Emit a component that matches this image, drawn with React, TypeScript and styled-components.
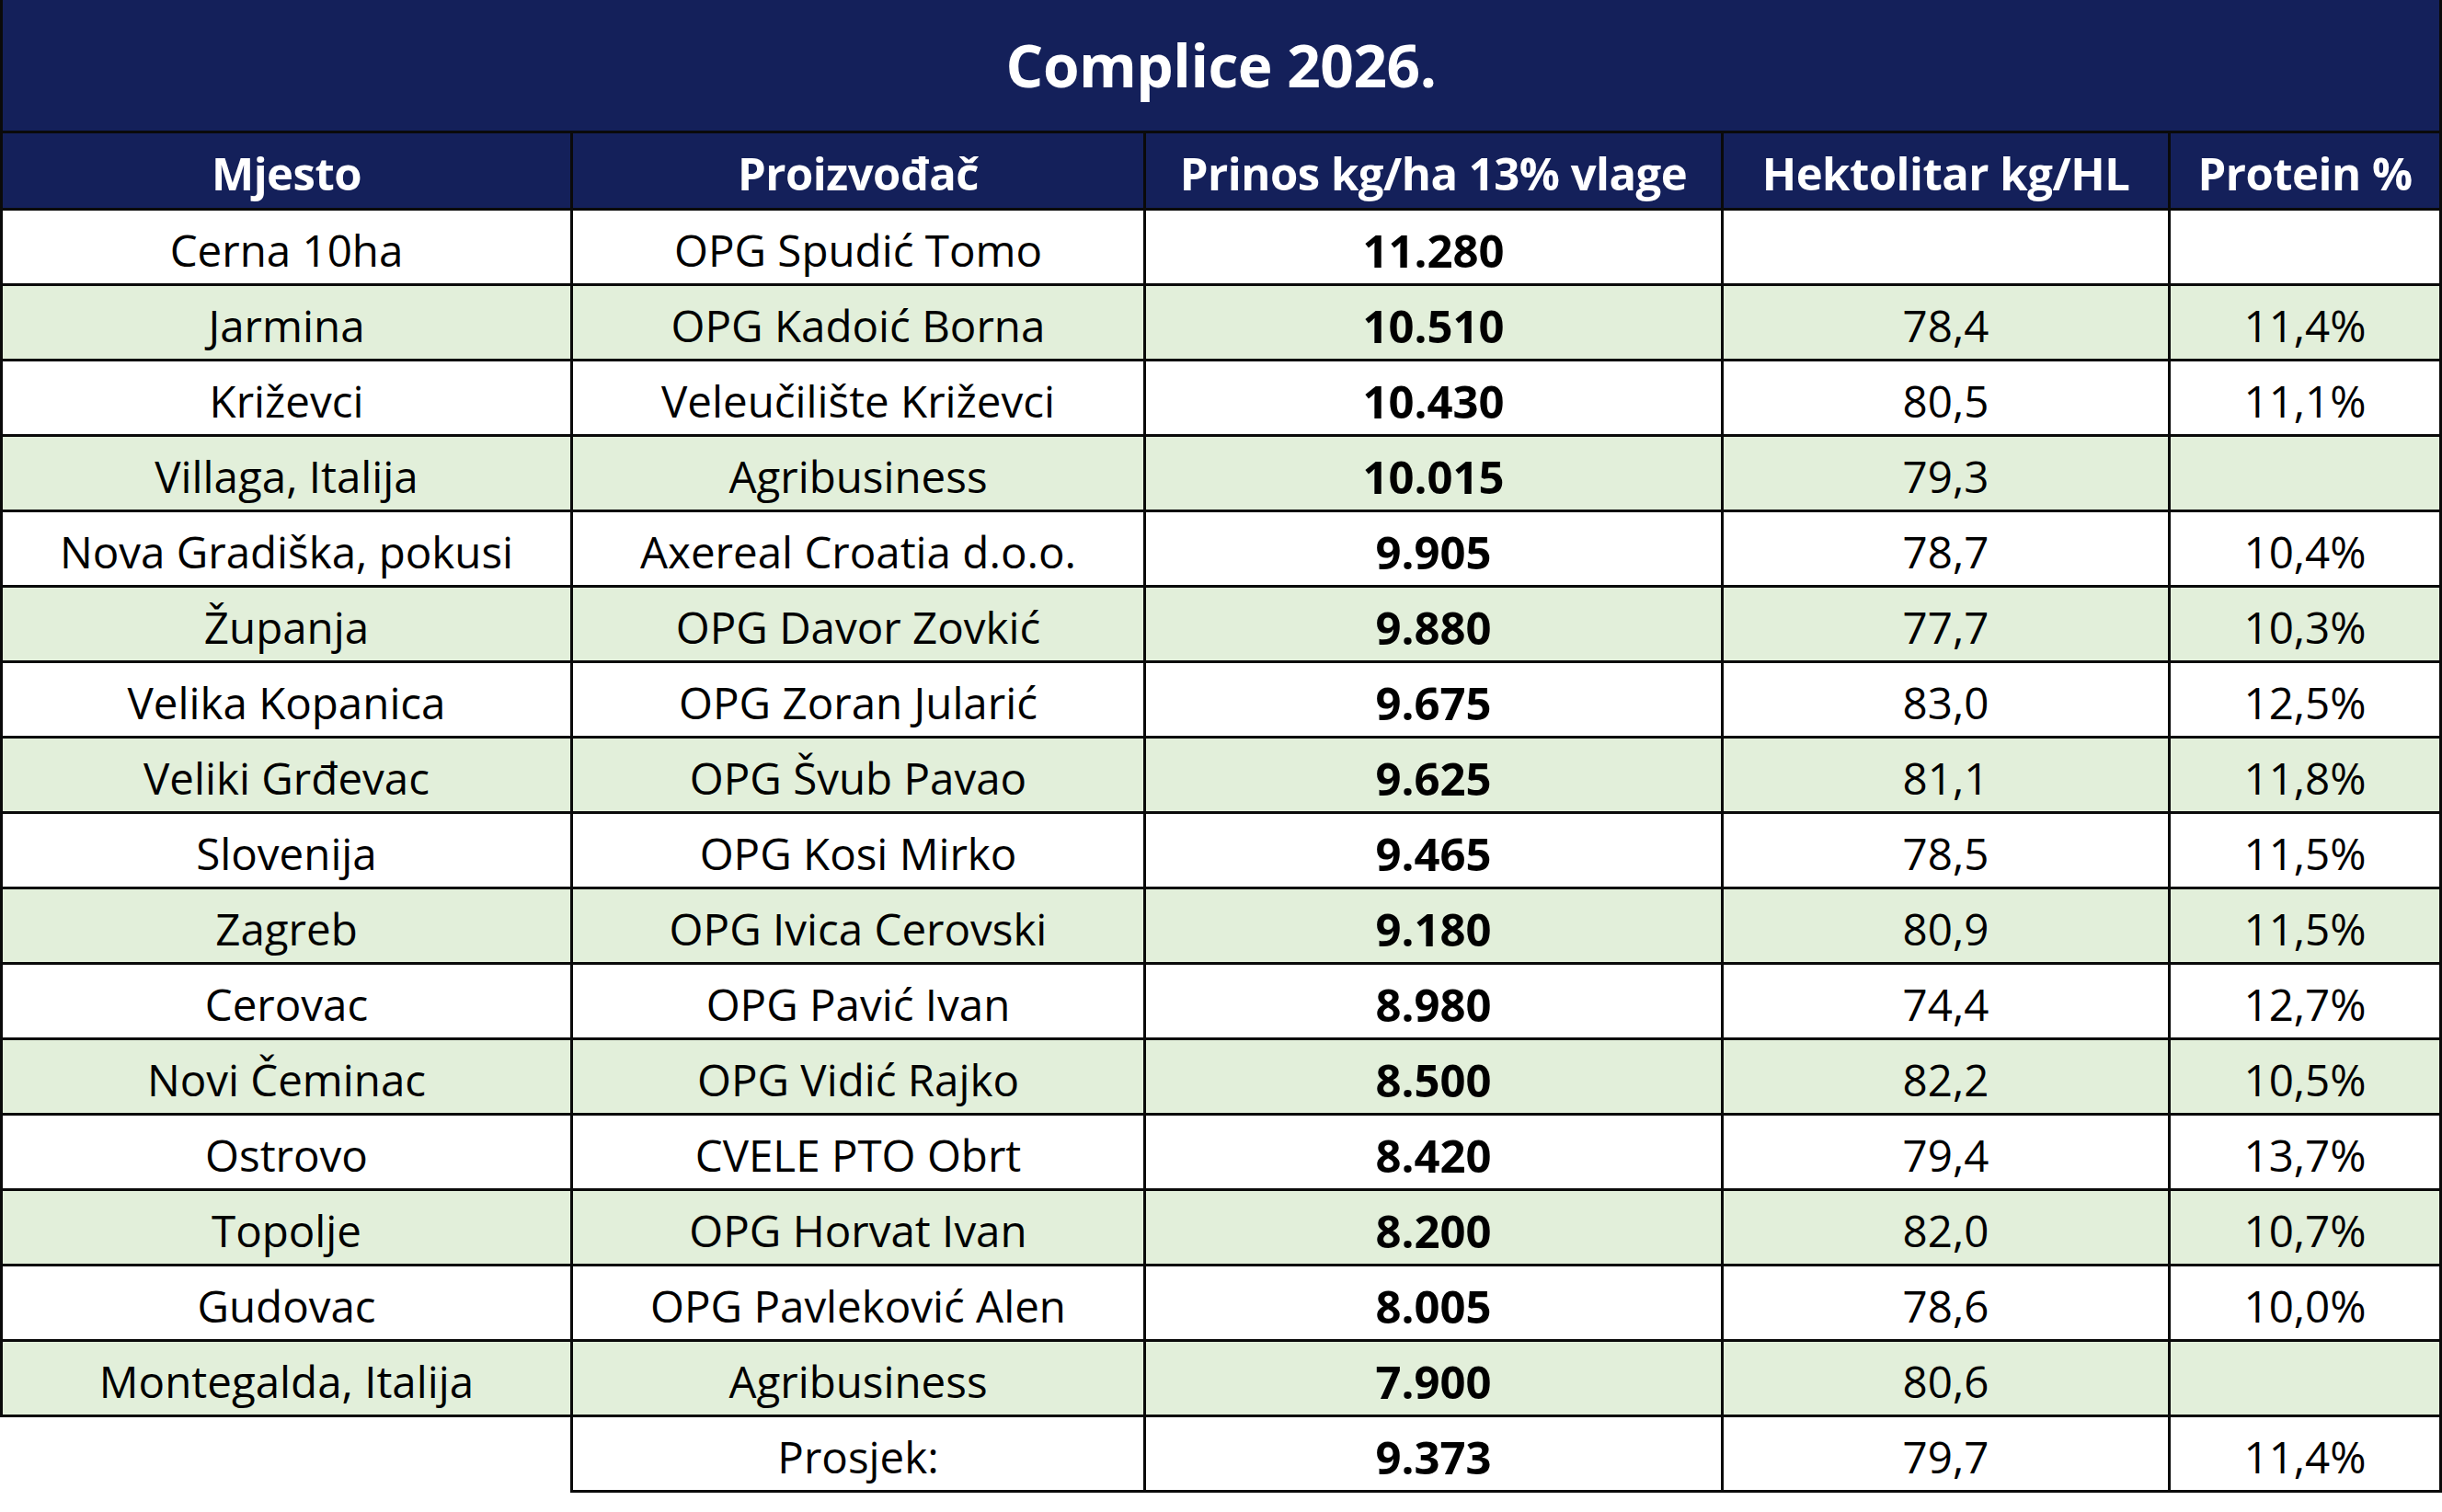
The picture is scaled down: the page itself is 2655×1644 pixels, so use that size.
import React from "react";
import styled, { createGlobalStyle } from "styled-components";

const GlobalStyle = createGlobalStyle`
  html, body {
    margin: 0;
    padding: 0;
    background: #ffffff;
  }
  body {
    font-family: "Open Sans", "Noto Sans", "Liberation Sans", sans-serif;
    color: #000;
  }
`;

const NAVY = "#14205a";
const GREEN = "#e2efda";
const LINE = "3px solid #0a0a0a";

const Table = styled.table`
  border-collapse: collapse;
  table-layout: fixed;
  width: 2652px;
  font-family: "Open Sans", "Noto Sans", "Liberation Sans", sans-serif;
`;

const TitleCell = styled.th`
  background: ${NAVY};
  color: #ffffff;
  height: 139px;
  padding: 0 0 2px;
  font-size: 64px;
  font-weight: 700;
  letter-spacing: -0.5px;
  text-align: center;
  vertical-align: middle;
  border: ${LINE};
  border-top: 1px solid ${NAVY};
`;

const HeadRow = styled.tr`
  height: 84px;
`;

const HeadCell = styled.th`
  background: ${NAVY};
  color: #ffffff;
  font-size: 49px;
  font-weight: 700;
  letter-spacing: -0.5px;
  text-align: center;
  vertical-align: middle;
  padding: 4px 0 0;
  border: ${LINE};
  white-space: nowrap;
`;

const Row = styled.tr<{ $shaded: boolean }>`
  height: 82px;
  background: ${(p) => (p.$shaded ? GREEN : "#ffffff")};
`;

const Cell = styled.td<{ $bold?: boolean; $blank?: boolean }>`
  font-size: ${(p) => (p.$bold ? "49px" : "47.5px")};
  font-weight: ${(p) => (p.$bold ? 700 : 400)};
  text-align: center;
  vertical-align: middle;
  padding: 6px 0 0;
  white-space: nowrap;
  border: ${LINE};
  ${(p) => (p.$blank ? "border-left: none; border-bottom: none; background: #fff;" : "")}
`;

type Entry = [string, string, string, string, string];

const rows: Entry[] = [
  ["Cerna 10ha", "OPG Spudić Tomo", "11.280", "", ""],
  ["Jarmina", "OPG Kadoić Borna", "10.510", "78,4", "11,4%"],
  ["Križevci", "Veleučilište Križevci", "10.430", "80,5", "11,1%"],
  ["Villaga, Italija", "Agribusiness", "10.015", "79,3", ""],
  ["Nova Gradiška, pokusi", "Axereal Croatia d.o.o.", "9.905", "78,7", "10,4%"],
  ["Županja", "OPG Davor Zovkić", "9.880", "77,7", "10,3%"],
  ["Velika Kopanica", "OPG Zoran Jularić", "9.675", "83,0", "12,5%"],
  ["Veliki Grđevac", "OPG Švub Pavao", "9.625", "81,1", "11,8%"],
  ["Slovenija", "OPG Kosi Mirko", "9.465", "78,5", "11,5%"],
  ["Zagreb", "OPG Ivica Cerovski", "9.180", "80,9", "11,5%"],
  ["Cerovac", "OPG Pavić Ivan", "8.980", "74,4", "12,7%"],
  ["Novi Čeminac", "OPG Vidić Rajko", "8.500", "82,2", "10,5%"],
  ["Ostrovo", "CVELE PTO Obrt", "8.420", "79,4", "13,7%"],
  ["Topolje", "OPG Horvat Ivan", "8.200", "82,0", "10,7%"],
  ["Gudovac", "OPG Pavleković Alen", "8.005", "78,6", "10,0%"],
  ["Montegalda, Italija", "Agribusiness", "7.900", "80,6", ""],
];

const widths = [620, 623, 628, 486, 295];

export default function App() {
  return (
    <>
      <GlobalStyle />
      <Table>
        <colgroup>
          {widths.map((w, i) => (
            <col key={i} style={{ width: w }} />
          ))}
        </colgroup>
        <thead>
          <tr>
            <TitleCell colSpan={5}>Complice 2026.</TitleCell>
          </tr>
          <HeadRow>
            <HeadCell>Mjesto</HeadCell>
            <HeadCell>Proizvođač</HeadCell>
            <HeadCell>Prinos kg/ha 13% vlage</HeadCell>
            <HeadCell>Hektolitar kg/HL</HeadCell>
            <HeadCell>Protein %</HeadCell>
          </HeadRow>
        </thead>
        <tbody>
          {rows.map((r, i) => (
            <Row key={i} $shaded={i % 2 === 1}>
              <Cell>{r[0]}</Cell>
              <Cell>{r[1]}</Cell>
              <Cell $bold>{r[2]}</Cell>
              <Cell>{r[3]}</Cell>
              <Cell>{r[4]}</Cell>
            </Row>
          ))}
          <Row $shaded={false}>
            <Cell $blank />
            <Cell>Prosjek:</Cell>
            <Cell $bold>9.373</Cell>
            <Cell>79,7</Cell>
            <Cell>11,4%</Cell>
          </Row>
        </tbody>
      </Table>
    </>
  );
}
